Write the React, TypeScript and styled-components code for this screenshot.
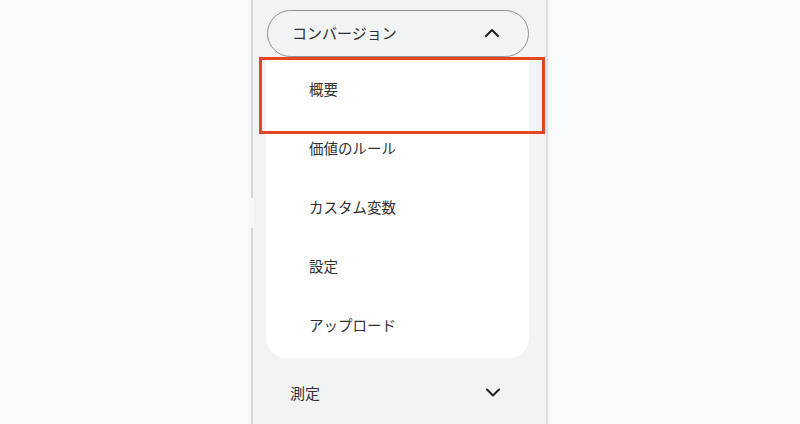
import React from "react";
import styled, { createGlobalStyle } from "styled-components";

const Global = createGlobalStyle`
  html, body { margin: 0; padding: 0; background: #f8f9fa; height: 100%; overflow: hidden; }
  body { font-family: "Noto Sans CJK JP", "Noto Sans", sans-serif; color: #2f3134; }
  #root { height: 100%; }
`;

const Page = styled.div`
  height: 424px;
  display: flex;
  padding-left: 251px;
  box-sizing: border-box;
`;

const Panel = styled.nav`
  position: relative;
  width: 297px;
  height: 100%;
  box-sizing: border-box;
  background: #f1f3f4;
  border-left: 2px solid #d3d5d8;
  border-right: 2px solid #dcdee1;
  padding: 10px 17px 0 14px;
  display: flex;
  flex-direction: column;
`;

const Notch = styled.div`
  position: absolute;
  left: -3px;
  top: 198px;
  width: 4px;
  height: 30px;
  background: #f8f9fa;
`;

const Header = styled.button`
  display: flex;
  align-items: center;
  justify-content: space-between;
  height: 47px;
  width: 262px;
  box-sizing: border-box;
  border: 1px solid #8d9195;
  border-radius: 24px;
  background: #f1f3f4;
  padding: 0 29px 2px 24px;
  font-family: inherit;
  font-size: 15px;
  color: #2f3134;
  cursor: pointer;
`;

const Card = styled.ul`
  list-style: none;
  margin: 0 0 0 -1px;
  width: 263px;
  box-sizing: border-box;
  background: #ffffff;
  border-radius: 0 0 20px 20px;
  padding: 2px 0 4px 0;
  position: relative;
`;

const Item = styled.li`
  position: relative;
  height: 59px;
  display: flex;
  align-items: center;
  padding-left: 43px;
  font-size: 14.5px;
  color: #2f3134;
`;

const Highlight = styled.div`
  position: absolute;
  left: -7px;
  top: -2px;
  width: 286px;
  height: 77px;
  box-sizing: border-box;
  border: 3px solid #e5461f;
`;

const Row = styled.div`
  display: flex;
  align-items: center;
  justify-content: space-between;
  height: 50px;
  margin-top: 9px;
  width: 262px;
  box-sizing: border-box;
  padding: 0 29px 0 23px;
  font-size: 15px;
  color: #2f3134;
`;

const Chevron = ({ up }: { up?: boolean }) => (
  <svg width="14" height="9" viewBox="0 0 14 9" fill="none">
    <polyline
      points={up ? "1,8 7,2 13,8" : "1,1.5 7,7.5 13,1.5"}
      stroke="#202124"
      strokeWidth="2"
      strokeLinecap="round"
      strokeLinejoin="round"
    />
  </svg>
);

const items = ["概要", "価値のルール", "カスタム変数", "設定", "アップロード"];

export default function App() {
  return (
    <>
      <Global />
      <Page>
        <Panel>
          <Notch />
          <Header>
            <span>コンバージョン</span>
            <Chevron up />
          </Header>
          <Card>
            {items.map((t, i) => (
              <Item key={t}>
                {i === 0 && <Highlight />}
                {t}
              </Item>
            ))}
          </Card>
          <Row>
            <span>測定</span>
            <Chevron />
          </Row>
        </Panel>
      </Page>
    </>
  );
}
